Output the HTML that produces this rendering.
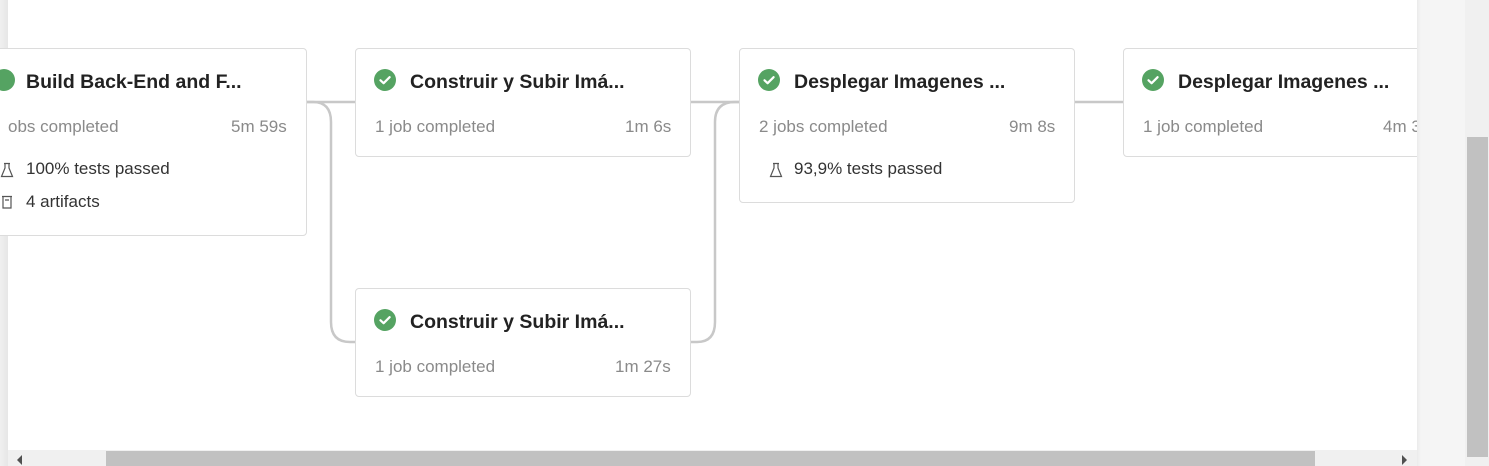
<!DOCTYPE html>
<html><head><meta charset="utf-8"><style>
body{margin:0;width:1489px;height:466px;overflow:hidden;background:#fff;font-family:"Liberation Sans",sans-serif;position:relative}
.card{position:absolute;background:#fff;border:1px solid #dcdcdc;border-radius:4px;box-sizing:border-box}
.t{position:absolute;font-size:19.5px;font-weight:600;color:#222;white-space:nowrap}
.s{position:absolute;font-size:17px;color:#8a8a8a;white-space:nowrap}
.r{position:absolute;font-size:17px;color:#333;white-space:nowrap}
.ic{position:absolute;width:22px;height:22px}
</style></head><body>
<svg style="position:absolute;left:0;top:0" width="1489" height="466">
<g fill="none" stroke="#c8c8c8" stroke-width="2.5">
<path d="M300 102 H360"/>
<path d="M300 102 H313 Q331 102 331 122 V322 Q331 342 350 342 H360"/>
<path d="M690 102 H740"/>
<path d="M690 342 H697 Q715 342 715 322 V122 Q715 102 735 102 H740"/>
<path d="M1074 102 H1124"/>
</g></svg>
<div style="position:absolute;left:0;top:0;width:8px;height:466px;background:linear-gradient(90deg,#f0f0f0,#e6e6e6)"></div>

<div class="card" style="left:-10px;top:48px;width:317px;height:188px"></div>
<div class="card" style="left:355px;top:48px;width:336px;height:109px"></div>
<div class="card" style="left:739px;top:48px;width:336px;height:155px"></div>
<div class="card" style="left:1123px;top:48px;width:336px;height:109px"></div>
<div class="card" style="left:355px;top:288px;width:336px;height:109px"></div>

<svg width="0" height="0"><defs><symbol id="ck" viewBox="0 0 22 22"><circle cx="11" cy="11" r="11" fill="#55a362"/><path d="M6.5 11.3 L9.6 14.2 L15.6 8.2" fill="none" stroke="#fff" stroke-width="2.2" stroke-linecap="round" stroke-linejoin="round"/></symbol>
<symbol id="fl" viewBox="0 0 14 16"><path d="M4 1.5 H10 M5 1.5 V6 L1.5 14.5 H12.5 L9 6 V1.5" fill="none" stroke="#555" stroke-width="1.2"/></symbol>
<symbol id="ar" viewBox="0 0 14 16"><path d="M2 2.5 H12 M3 2.5 V14 H11 V2.5 M5 6 H9" fill="none" stroke="#555" stroke-width="1.2"/></symbol></defs></svg>

<svg class="ic" style="left:-7px;top:69px" viewBox="0 0 22 22"><circle cx="11" cy="11" r="11" fill="#55a362"/></svg>
<div class="t" style="left:26px;top:71px">Build Back-End and F...</div>
<div class="s" style="left:8px;top:117px">obs completed</div>
<div class="s" style="left:231px;top:117px">5m 59s</div>
<svg style="position:absolute;left:0px;top:162px" width="14" height="16"><use href="#fl"/></svg>
<div class="r" style="left:26px;top:159px">100% tests passed</div>
<svg style="position:absolute;left:0px;top:194px" width="14" height="16"><use href="#ar"/></svg>
<div class="r" style="left:26px;top:192px">4 artifacts</div>

<svg class="ic" style="left:374px;top:69px"><use href="#ck"/></svg>
<div class="t" style="left:410px;top:71px">Construir y Subir Imá...</div>
<div class="s" style="left:375px;top:117px">1 job completed</div>
<div class="s" style="left:625px;top:117px">1m 6s</div>

<svg class="ic" style="left:758px;top:69px"><use href="#ck"/></svg>
<div class="t" style="left:794px;top:71px">Desplegar Imagenes ...</div>
<div class="s" style="left:759px;top:117px">2 jobs completed</div>
<div class="s" style="left:1009px;top:117px">9m 8s</div>
<svg style="position:absolute;left:769px;top:162px" width="14" height="16"><use href="#fl"/></svg>
<div class="r" style="left:794px;top:159px">93,9% tests passed</div>

<svg class="ic" style="left:1142px;top:69px"><use href="#ck"/></svg>
<div class="t" style="left:1178px;top:71px">Desplegar Imagenes ...</div>
<div class="s" style="left:1143px;top:117px">1 job completed</div>
<div class="s" style="left:1383px;top:117px">4m 3</div>

<svg class="ic" style="left:374px;top:309px"><use href="#ck"/></svg>
<div class="t" style="left:410px;top:311px">Construir y Subir Imá...</div>
<div class="s" style="left:375px;top:357px">1 job completed</div>
<div class="s" style="left:615px;top:357px">1m 27s</div>

<div style="position:absolute;left:8px;top:450px;width:1409px;height:16px;background:#f0f0f0"></div>
<div style="position:absolute;left:106px;top:451px;width:1209px;height:15px;background:#c1c1c1"></div>
<div style="position:absolute;left:17px;top:455px;width:0;height:0;border-top:5px solid transparent;border-bottom:5px solid transparent;border-right:5px solid #505050"></div>
<div style="position:absolute;left:1402px;top:455px;width:0;height:0;border-top:5px solid transparent;border-bottom:5px solid transparent;border-left:5px solid #505050"></div>
<div style="position:absolute;left:1417px;top:0;width:48px;height:466px;background:linear-gradient(90deg,#ebebeb,#f5f5f5 4px)"></div>
<div style="position:absolute;left:1465px;top:0;width:24px;height:466px;background:#f0f0f0"></div>
<div style="position:absolute;left:1467px;top:137px;width:21px;height:320px;background:#c1c1c1"></div>
</body></html>
